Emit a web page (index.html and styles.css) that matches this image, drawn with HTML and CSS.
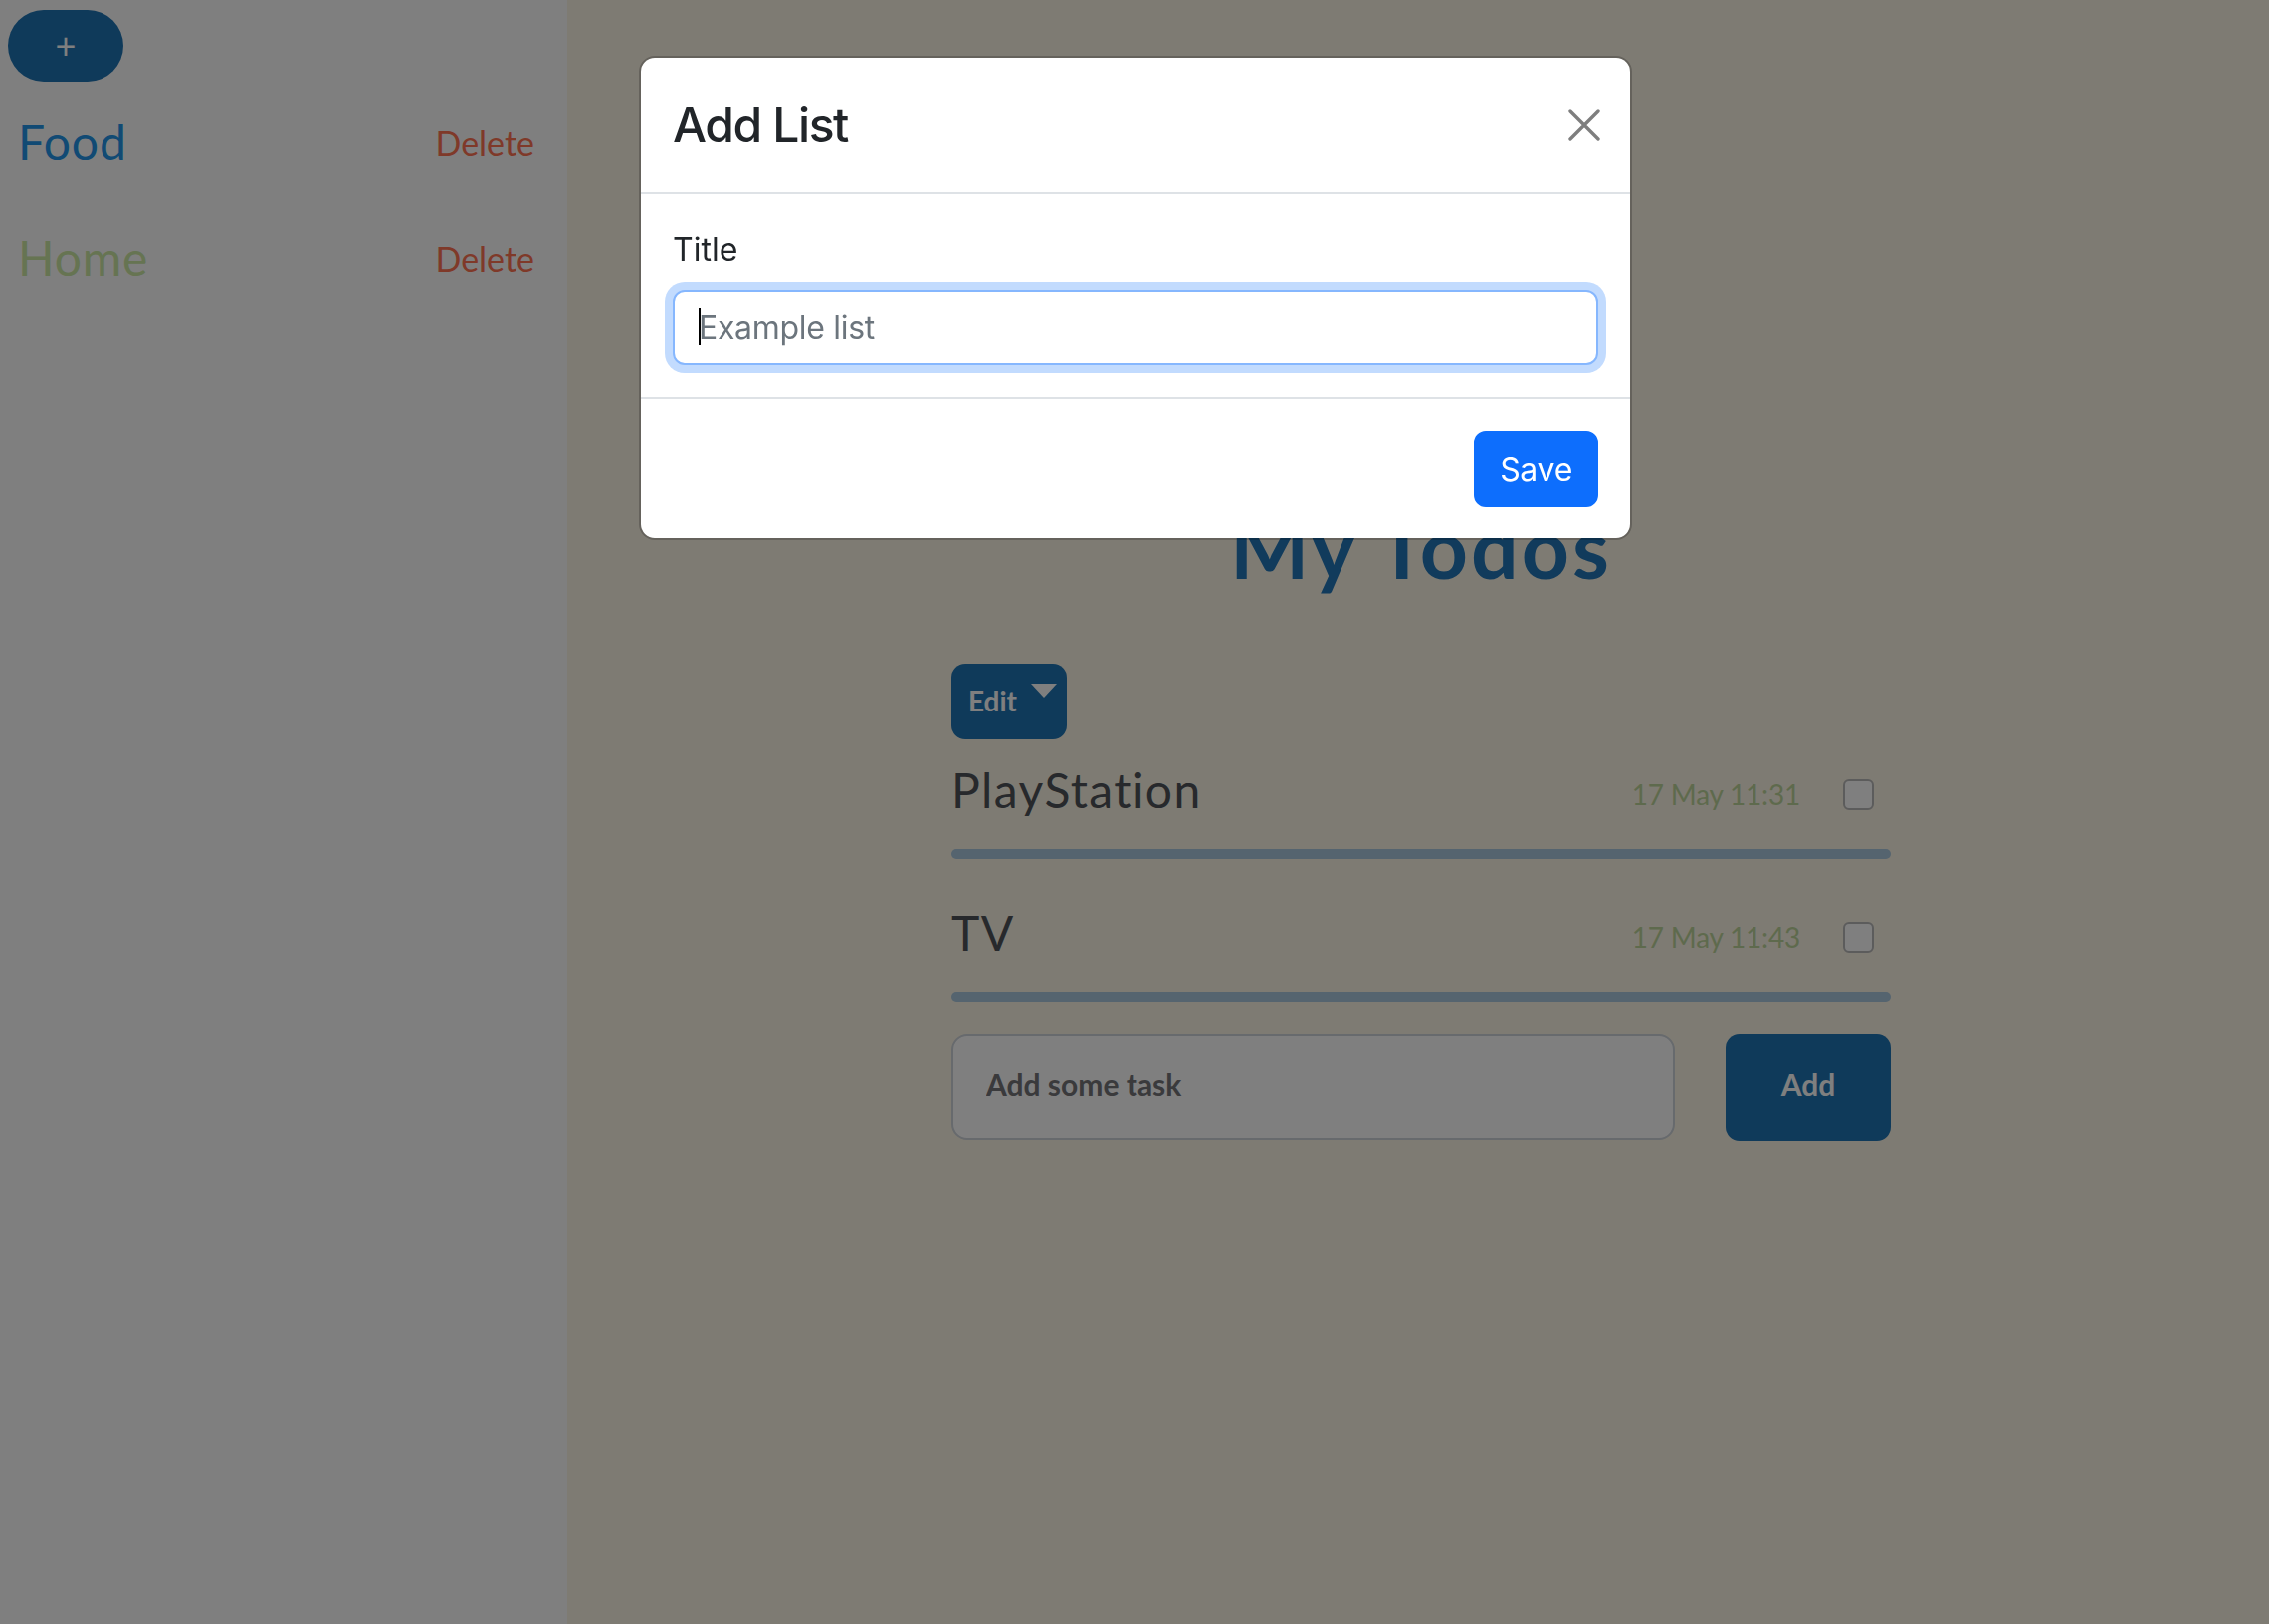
FILE: index.html
```html
<!DOCTYPE html>
<html lang="en">
<head>
<meta charset="utf-8">
<title>My Todos</title>
<link rel="stylesheet" href="styles.css">
</head>
<body>
<div class="app">
  <aside class="sidebar">
    <button class="add-list-btn" type="button">+</button>
    <ul class="lists">
      <li class="list-row">
        <span class="list-name list-name-food">Food</span>
        <button class="delete-btn" type="button">Delete</button>
      </li>
      <li class="list-row">
        <span class="list-name list-name-home">Home</span>
        <button class="delete-btn" type="button">Delete</button>
      </li>
    </ul>
  </aside>
  <main class="main">
    <div class="todo-column">
      <h1 class="todo-heading">My Todos</h1>
      <button class="edit-btn" type="button"><span class="edit-label">Edit</span><span class="edit-caret"></span></button>
      <ul class="tasks">
        <li class="task">
          <div class="task-row">
            <span class="task-title">PlayStation</span>
            <span class="task-date">17 May 11:31</span>
            <span class="task-check"></span>
          </div>
          <div class="task-bar"></div>
        </li>
        <li class="task">
          <div class="task-row">
            <span class="task-title">TV</span>
            <span class="task-date">17 May 11:43</span>
            <span class="task-check"></span>
          </div>
          <div class="task-bar"></div>
        </li>
      </ul>
      <form class="task-form">
        <input class="task-input" type="text" placeholder="Add some task">
        <button class="task-add" type="button">Add</button>
      </form>
    </div>
  </main>
</div>

<div class="backdrop"></div>

<div class="modal">
  <div class="modal-content">
    <div class="modal-header">
      <h4 class="modal-title">Add List</h4>
      <button class="modal-close" type="button" aria-label="Close">
        <svg viewBox="0 0 32 32" width="32" height="32"><path d="M2 2 L30 30 M30 2 L2 30" stroke="#000" stroke-width="3.4" stroke-linecap="round" fill="none"/></svg>
      </button>
    </div>
    <div class="modal-body">
      <label class="field-label" for="title">Title</label>
      <div class="field-wrap">
        <input id="title" class="field-input" type="text" placeholder="Example list">
        <span class="field-caret"></span>
      </div>
    </div>
    <div class="modal-footer">
      <button class="save-btn" type="button">Save</button>
    </div>
  </div>
</div>
</body>
</html>
```

FILE: styles.css
```css
* { box-sizing: border-box; }

html, body {
  margin: 0;
  padding: 0;
  height: 100%;
}

body {
  font-family: "Lato", "Noto Sans", sans-serif;
  background: #fdf6e6;
  overflow: hidden;
}

button, input {
  font-family: inherit;
}

.app {
  display: flex;
  min-height: 1632px;
}

/* Sidebar */
.sidebar {
  width: 570px;
  flex: 0 0 570px;
  background: #ffffff;
  padding: 10px 33px 0 8px;
}

.add-list-btn {
  width: 116px;
  height: 72px;
  border: none;
  border-radius: 36px;
  background: #1e74b4;
  color: #ffffff;
  font-size: 36px;
  font-weight: 400;
  line-height: 1;
  padding: 0 0 2px;
  display: flex;
  align-items: center;
  justify-content: center;
}

.lists {
  list-style: none;
  margin: 2px 0 0;
  padding: 0;
}

.list-row {
  height: 116px;
  display: flex;
  align-items: center;
  justify-content: space-between;
  padding-left: 10px;
}

.list-name {
  font-size: 48px;
  font-weight: 400;
  letter-spacing: 0.8px;
}

.list-name-food { color: #2294e8; }
.list-name-home { color: #cce8a4; }

.delete-btn {
  border: none;
  background: none;
  padding: 0;
  font-size: 34px;
  color: #ff7352;
  margin-top: 2px;
}

/* Main */
.main {
  flex: 1;
  padding-left: 6px;
}

.todo-column {
  width: 944px;
  margin: 0 auto;
  padding-top: 500px;
}

.todo-heading {
  margin: 0 0 67px;
  text-align: center;
  font-size: 84px;
  line-height: 100px;
  font-weight: 700;
  letter-spacing: 3px;
  color: #2277b9;
}

.edit-btn {
  width: 116px;
  height: 76px;
  border: none;
  border-radius: 14px;
  background: #1e74b4;
  color: #ffffff;
  display: flex;
  align-items: center;
  padding: 0 0 2px 17px;
}

.edit-label {
  font-size: 28px;
  font-weight: 700;
}

.edit-caret {
  align-self: flex-start;
  margin: 20px 0 0 14px;
  width: 0;
  height: 0;
  border-left: 13.5px solid transparent;
  border-right: 13.5px solid transparent;
  border-top: 14px solid #ffffff;
}

.tasks {
  list-style: none;
  margin: 0;
  padding: 0;
}

.task {
  margin-bottom: 24px;
}

.task-row {
  height: 110px;
  display: flex;
  align-items: center;
}

.task-title {
  flex: 1;
  font-size: 48px;
  letter-spacing: 1.4px;
  color: #4e5258;
  margin-bottom: 10px;
}

.task-date {
  font-size: 28px;
  letter-spacing: -0.2px;
  color: #bdd59a;
  margin-right: 43px;
}

.task-check {
  width: 31px;
  height: 31px;
  border: 2px solid #b8b8b8;
  border-radius: 6px;
  background: #ffffff;
  margin-right: 17px;
}

.task-bar {
  height: 10px;
  border-radius: 5px;
  background: #aac8de;
}

.task-form {
  display: flex;
  gap: 51px;
  margin-top: 32px;
}

.task-input {
  flex: 1;
  height: 107px;
  border: 2px solid #ced4da;
  border-radius: 16px;
  background: #ffffff;
  padding: 0 33px 8px;
  font-size: 30px;
  font-weight: 700;
}

.task-input::placeholder {
  color: #747478;
}

.task-add {
  width: 166px;
  height: 108px;
  border: none;
  border-radius: 14px;
  background: #1e74b4;
  color: #ffffff;
  font-size: 30px;
  font-weight: 700;
  padding: 0 0 8px;
}

/* Modal */
.backdrop {
  position: fixed;
  inset: 0;
  background: rgba(0, 0, 0, 0.5);
}

.modal {
  position: fixed;
  top: 56px;
  left: 2px;
  right: 0;
  width: 998px;
  margin: 0 auto;
  font-family: "Inter", "Liberation Sans", sans-serif;
  color: #212529;
}

.modal-content {
  background: #ffffff;
  border: 2px solid rgba(0, 0, 0, 0.2);
  border-radius: 16px;
  background-clip: padding-box;
}

.modal-header {
  display: flex;
  align-items: center;
  justify-content: space-between;
  padding: 32px;
  border-bottom: 2px solid #dee2e6;
}

.modal-title {
  margin: 0;
  font-size: 48px;
  line-height: 71px;
  font-weight: 500;
  letter-spacing: -1.4px;
}

.modal-close {
  width: 32px;
  height: 32px;
  padding: 0;
  margin-right: -2px;
  border: none;
  background: none;
  opacity: 0.5;
  display: flex;
}

.modal-body {
  padding: 32px;
}

.field-label {
  display: block;
  font-size: 32px;
  line-height: 48px;
  margin-bottom: 16px;
}

.field-wrap {
  position: relative;
}

.field-input {
  display: block;
  width: 100%;
  height: 76px;
  padding: 12px 24px;
  font-size: 32px;
  color: #212529;
  border: 2px solid #86b7fe;
  border-radius: 12px;
  box-shadow: 0 0 0 8px rgba(13, 110, 253, 0.25);
  outline: none;
  letter-spacing: -0.3px;
}

.field-input::placeholder {
  color: #6c757d;
}

.field-caret {
  position: absolute;
  left: 26px;
  top: 19px;
  width: 2px;
  height: 37px;
  background: #000000;
}

.modal-footer {
  display: flex;
  justify-content: flex-end;
  padding: 24px;
  border-top: 2px solid #dee2e6;
}

.save-btn {
  margin: 8px;
  height: 76px;
  padding: 0 24px;
  border: 2px solid #0d6efd;
  border-radius: 12px;
  background: #0d6efd;
  color: #ffffff;
  font-family: "Inter", "Liberation Sans", sans-serif;
  font-size: 32px;
  letter-spacing: -0.3px;
}
```
